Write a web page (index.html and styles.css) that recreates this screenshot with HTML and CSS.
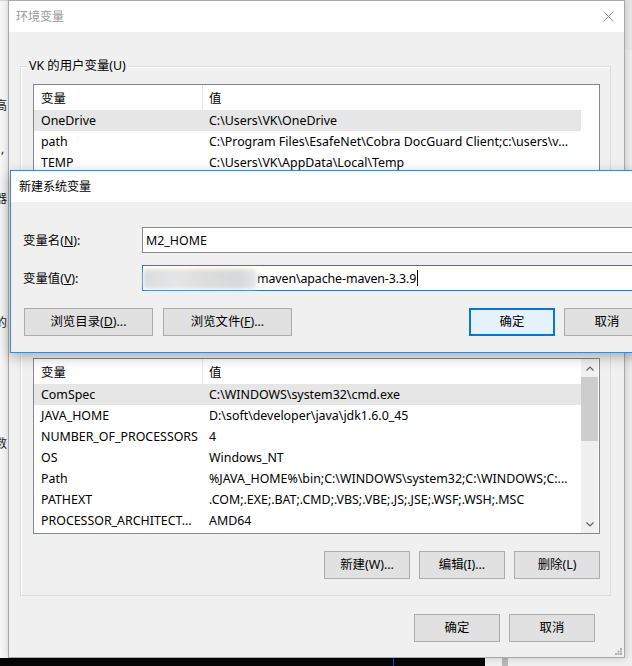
FILE: index.html
```html
<!DOCTYPE html>
<html lang="zh-CN">
<head>
<meta charset="utf-8">
<title>环境变量</title>
<link rel="stylesheet" href="styles.css">
</head>
<body>
<div class="bgwin-left">
  <span class="frag fr1">高</span>
  <span class="frag fr2">,</span>
  <span class="frag fr3">器</span>
  <span class="frag fr4">的.</span>
  <span class="frag fr5">数</span>
</div>
<div class="bgwin-right"></div>
<div class="console"><span class="cursor-line"></span></div>
<div class="bgwin-bottom"><span class="mini-sb"></span></div>

<div class="win main">
  <div class="titlebar">
    <span class="title">环境变量</span>
    <svg class="close" width="11" height="11" viewBox="0 0 11 11"><path d="M0.5 0.5L10.5 10.5M10.5 0.5L0.5 10.5" stroke="#9a9a9a" stroke-width="1" fill="none"/></svg>
  </div>
  <div class="body">
    <div class="group">
      <span class="glabel">VK 的用户变量(U)</span>
      <div class="list">
        <div class="cols">
          <div class="hdr"><span class="c1">变量</span><span class="c2">值</span></div>
          <div class="row sel"><span class="c1">OneDrive</span><span class="c2">C:\Users\VK\OneDrive</span></div>
          <div class="row"><span class="c1">path</span><span class="c2">C:\Program Files\EsafeNet\Cobra DocGuard Client;c:\users\v...</span></div>
          <div class="row"><span class="c1">TEMP</span><span class="c2">C:\Users\VK\AppData\Local\Temp</span></div>
          <div class="row"><span class="c1">TMP</span><span class="c2">C:\Users\VK\AppData\Local\Temp</span></div>
        </div>
        <div class="sb blank"></div>
      </div>
      <div class="btnrow">
        <button class="btn">新建(N)...</button>
        <button class="btn">编辑(E)...</button>
        <button class="btn">删除(D)</button>
      </div>
    </div>

    <div class="group g2">
      <span class="glabel">系统变量(S)</span>
      <div class="list">
        <div class="cols">
          <div class="hdr"><span class="c1">变量</span><span class="c2">值</span></div>
          <div class="row sel"><span class="c1">ComSpec</span><span class="c2">C:\WINDOWS\system32\cmd.exe</span></div>
          <div class="row"><span class="c1">JAVA_HOME</span><span class="c2">D:\soft\developer\java\jdk1.6.0_45</span></div>
          <div class="row"><span class="c1">NUMBER_OF_PROCESSORS</span><span class="c2">4</span></div>
          <div class="row"><span class="c1">OS</span><span class="c2">Windows_NT</span></div>
          <div class="row"><span class="c1">Path</span><span class="c2">%JAVA_HOME%\bin;C:\WINDOWS\system32;C:\WINDOWS;C:...</span></div>
          <div class="row"><span class="c1">PATHEXT</span><span class="c2">.COM;.EXE;.BAT;.CMD;.VBS;.VBE;.JS;.JSE;.WSF;.WSH;.MSC</span></div>
          <div class="row"><span class="c1">PROCESSOR_ARCHITECT...</span><span class="c2">AMD64</span></div>
        </div>
        <div class="sb">
          <span class="sbbtn"><svg width="8" height="5" viewBox="0 0 8 5"><path d="M0.5 4.5L4 1L7.5 4.5" stroke="#606060" stroke-width="1.2" fill="none"/></svg></span>
          <span class="thumb"></span>
          <span class="sbbtn down"><svg width="8" height="5" viewBox="0 0 8 5"><path d="M0.5 0.5L4 4L7.5 0.5" stroke="#606060" stroke-width="1.2" fill="none"/></svg></span>
        </div>
      </div>
      <div class="btnrow">
        <button class="btn">新建(W)...</button>
        <button class="btn">编辑(I)...</button>
        <button class="btn">删除(L)</button>
      </div>
    </div>

    <div class="footer">
      <button class="btn">确定</button>
      <button class="btn">取消</button>
    </div>
  </div>
  <svg class="grip" width="7" height="7" viewBox="0 0 7 7"><g fill="#b0b0b0"><rect x="5" y="0" width="2" height="2"/><rect x="2.5" y="2.5" width="2" height="2"/><rect x="5" y="2.5" width="2" height="2"/><rect x="0" y="5" width="2" height="2"/><rect x="2.5" y="5" width="2" height="2"/><rect x="5" y="5" width="2" height="2"/></g></svg>
</div>

<div class="win dlg">
  <div class="titlebar"><span class="title">新建系统变量</span></div>
  <div class="body">
    <div class="frow">
      <span class="flabel">变量名(<u>N</u>):</span>
      <span class="field">M2_HOME</span>
    </div>
    <div class="frow r2">
      <span class="flabel">变量值(<u>V</u>):</span>
      <span class="field focus"><span class="blur"></span><span class="ftext">maven\apache-maven-3.3.9</span><span class="caret"></span></span>
    </div>
    <div class="dbtns">
      <button class="btn wide">浏览目录(<u>D</u>)...</button>
      <button class="btn wide">浏览文件(<u>F</u>)...</button>
      <button class="btn def">确定</button>
      <button class="btn">取消</button>
    </div>
  </div>
</div>
</body>
</html>
```

FILE: styles.css
```css
* { box-sizing: border-box; margin: 0; padding: 0; }
html, body { width: 632px; height: 666px; overflow: hidden; }
body {
  position: relative;
  background: #f0f0f0;
  font-family: "Noto Sans", "Noto Sans CJK SC", sans-serif;
  font-size: 12.4px;
  color: #000;
}

/* background windows */
.bgwin-left {
  position: absolute; left: 0; top: 0; width: 9px; height: 658px;
  background: #f6f6f6; overflow: hidden;
  border-top: 1px solid #d6d6d6;
}
.frag { position: absolute; left: -5px; font-size: 12px; line-height: 14px; color: #222; white-space: nowrap; }
.fr1 { top: 98px; }
.fr2 { top: 141px; left: 1px; }
.fr3 { top: 191px; }
.fr4 { top: 315px; }
.fr5 { top: 436px; }
.bgwin-right {
  position: absolute; left: 624px; top: 0; width: 8px; height: 658px;
  background: #ededed;
  border-top: 50px solid #e6e6e6;
}
.console {
  position: absolute; left: 0; top: 658px; width: 485px; height: 8px; background: #050505;
}
.cursor-line { position: absolute; left: 393px; top: 0; width: 1px; height: 8px; background: #2a2aff; }
.bgwin-bottom {
  position: absolute; left: 485px; top: 658px; width: 147px; height: 8px; background: #f0f0f0;
}
.mini-sb { position: absolute; left: 17px; top: 0; width: 6px; height: 8px; background: #b8b8b8; }

/* windows */
.win { position: absolute; background: #f0f0f0; display: flex; flex-direction: column; }
.titlebar { height: 31px; flex: none; background: #fff; display: flex; align-items: center; line-height: 16px; }
.title { font-size: 12px; }

.main {
  left: 8px; top: 0; width: 617px; height: 658px;
  border: 1px solid #a9a9a9;
  box-shadow: 0 0 7px rgba(0, 0, 0, 0.18);
}
.main .titlebar { padding-left: 7px; color: #9a9a9a; }
.main .close { margin-left: auto; margin-right: 10px; }
.main .body { flex: 1; padding: 34px 13px 0 11px; }

.group {
  position: relative;
  border: 1px solid #dcdcdc;
  box-shadow: inset 1px 1px 0 #fff;
  padding: 17px 10px 16px 12px;
}
.g2 { margin-top: 18px; }
.glabel {
  position: absolute; left: 6px; top: -9px;
  padding: 0 2px; background: #f0f0f0; line-height: 16px; white-space: nowrap;
}

.list {
  height: 176px; border: 1px solid #828790; background: #fff;
  display: flex; overflow: hidden;
}
.cols { flex: 1; min-width: 0; }
.hdr { height: 25px; display: flex; }
.hdr span { display: flex; align-items: center; }
.hdr .c1 { border-right: 1px solid #e5e5e5; }
.row { height: 21px; line-height: 21px; display: flex; white-space: nowrap; }
.row.sel { background: #e6e6e6; }
.c1 { width: 169px; flex: none; padding-left: 7px; overflow: hidden; white-space: nowrap; }
.c2 { flex: 1; padding-left: 6px; overflow: hidden; white-space: nowrap; }

.sb { width: 17px; flex: none; margin-right: 1px; background: #f0f0f0; display: flex; flex-direction: column; }
.sb.blank { background: #fff; }
.sbbtn { height: 17px; flex: none; display: flex; align-items: center; justify-content: center; padding-top: 2px; }
.sbbtn.down { margin-top: auto; padding-top: 0; padding-bottom: 0; }
.thumb { height: 64px; flex: none; margin-top: 1px; background: #cdcdcd; }

.btn {
  width: 86px; height: 28px; flex: none;
  border: 1px solid #adadad; background: #e1e1e1;
  font: inherit; color: #000; line-height: 16px;
}
.btnrow { display: flex; justify-content: flex-end; gap: 9px; margin-top: 17px; }
.footer { display: flex; justify-content: flex-end; gap: 9px; margin-top: 18px; padding-right: 16px; }
.grip { position: absolute; right: 2px; bottom: 2px; }

/* new system variable dialog */
.dlg {
  left: 10px; top: 170px; width: 652px; height: 183px;
  border: 1px solid #3d89d1;
  box-shadow: 0 4px 12px rgba(0, 0, 0, 0.28);
}
.dlg .titlebar { padding-left: 8px; }
.dlg .body { flex: 1; padding: 25px 11px 0 12px; overflow: hidden; }
.frow { display: flex; align-items: center; height: 26px; }
.frow.r2 { margin-top: 12px; }
.flabel { width: 119px; flex: none; white-space: nowrap; }
.field {
  flex: 1; height: 26px; border: 1px solid #8a8a8a; background: #fff;
  display: flex; align-items: center; padding-left: 3px; white-space: nowrap;
}
.field.focus { border-color: #2a74c4; padding-left: 0; }
.blur {
  width: 114px; height: 20px; flex: none; margin-top: 2px;
  background: linear-gradient(90deg, #d9dcdf 0%, #e6e6e6 30%, #dcdcdc 55%, #d6d8da 85%, #e8e8e8 100%);
  filter: blur(2px); border-radius: 4px;
}
.ftext { letter-spacing: -0.1px; }
.caret { width: 1px; height: 16px; background: #000; margin-left: 1px; }
.dbtns { display: flex; margin-top: 17px; padding-left: 1px; }
.btn.wide { width: 129px; }
.dbtns .wide + .wide { margin-left: 10px; }
.btn.def { margin-left: auto; margin-right: 9px; border-color: #0078d7; box-shadow: inset 0 0 0 1px #0078d7; background: #e5f1fb; }
```
